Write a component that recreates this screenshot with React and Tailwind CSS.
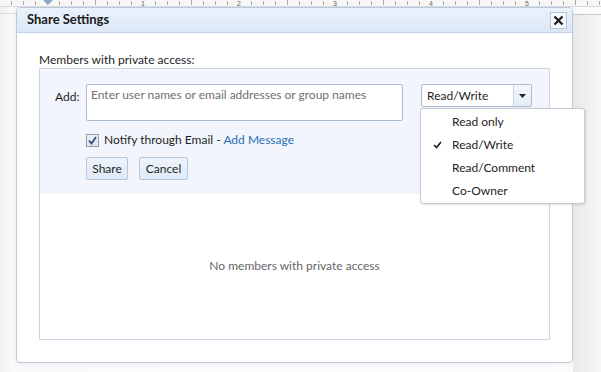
import React from "react";

function Ruler() {
  const ticks = [];
  for (let x = 47 - 36; x < 601; x += 12) {
    const rel = x - 47;
    if (rel % 96 === 0 && rel > 0) continue;
    const tall = rel % 48 === 0;
    ticks.push(
      <line key={x} x1={x + 0.5} x2={x + 0.5} y1={tall ? 0 : 1} y2={5} stroke="#a8a8a8" strokeWidth="1" />
    );
  }
  const nums = [1, 2, 3, 4, 5];
  return (
    <svg width="601" height="7" className="block">
      <rect x="0" y="0" width="601" height="7" fill="#f7f7f7" />
      {ticks}
      {nums.map((n) => (
        <text key={n} x={47 + 96 * n} y="6" fontSize="7" fill="#666" textAnchor="middle" fontFamily="Liberation Sans, sans-serif">
          {n}
        </text>
      ))}
      <path d="M43 0 L53 0 L48 5 Z" fill="#8fa6c4" />
      <line x1="0" x2="601" y1="6.5" y2="6.5" stroke="#d9d9d9" />
    </svg>
  );
}

export default function App() {
  return (
    <div
      className="relative w-[601px] h-[372px] overflow-hidden bg-[linear-gradient(to_right,#f0f0f0,#fafafa_12px,#fbfbfb)] text-[12px] text-[#1e1e1e]"
      style={{ fontFamily: "Lato, 'Noto Sans', sans-serif" }}
    >
      <Ruler />
      <div className="absolute left-0 top-[13px] w-[16px] h-px bg-[#dcdcdc]" />
      <div className="absolute left-[573px] top-[14px] w-[28px] h-px bg-[#c9c9c9]" />
      <div className="absolute left-[573px] top-[15px] w-[28px] h-[357px] bg-[linear-gradient(to_right,#e9e9e9,#f7f7f7)]" />

      <div className="ml-[16px] w-[557px] h-[356px] border border-[#bccadd] rounded-[4px] bg-white overflow-hidden flex flex-col shadow-[0_0_6px_rgba(0,0,0,0.08)]">
        <div className="h-[25px] shrink-0 flex items-center justify-between pl-[10px] pr-[5px] bg-[linear-gradient(to_bottom,#eaf1fb,#dce7f6)] border-b border-[#c4d3e6]">
          <span className="font-bold text-[13px] text-[#1a1a1a]">Share Settings</span>
          <div className="w-[17px] h-[17px] border border-[#b7c6d8] bg-[#f4f7fb] flex items-center justify-center">
            <svg width="11" height="11" viewBox="0 0 11 11">
              <path d="M1.5 1.5 L9.5 9.5 M9.5 1.5 L1.5 9.5" stroke="#1a1a1a" strokeWidth="2.2" />
            </svg>
          </div>
        </div>

        <div className="pl-[22px] pt-[19px]">
          <div className="h-[16px] leading-[16px]">Members with private access:</div>
          <div className="w-[511px] h-[272px] border border-[#c8d6e6] flex flex-col">
            <div className="h-[125px] bg-[#f2f6fc] pt-[15px] flex flex-col">
              <div className="flex items-start">
                <span className="w-[46px] pl-[15px] pt-[5px] leading-[16px]">Add:</span>
                <div className="w-[317px] h-[37px] border border-[#a9bbd1] rounded-[2px] bg-white px-[4px] pt-[2px] leading-[16px] text-[#707070]">
                  Enter user names or email addresses or group names
                </div>
                <div className="ml-[18px] w-[111px] h-[23px] border border-[#a9bbd1] rounded-[2px] bg-white flex">
                  <span className="flex-1 pl-[5px] leading-[22px]">Read/Write</span>
                  <div className="w-[18px] border-l border-[#c4d2e3] bg-[linear-gradient(to_bottom,#f5f8fc,#e3ebf6)] flex items-center justify-center">
                    <svg width="7" height="4" viewBox="0 0 7 4">
                      <path d="M0 0 L7 0 L3.5 4 Z" fill="#222" />
                    </svg>
                  </div>
                </div>
              </div>
              <div className="flex items-center ml-[46px] mt-[11px] h-[16px]">
                <div className="w-[13px] h-[13px] border border-[#8f9db0] bg-[linear-gradient(to_bottom,#eef1f6,#dde3ec)] flex items-center justify-center">
                  <svg width="9" height="9" viewBox="0 0 9 9">
                    <path d="M1 4.5 L3.5 7.5 L8 1" stroke="#3a4a80" strokeWidth="1.8" fill="none" />
                  </svg>
                </div>
                <span className="ml-[5px] leading-[16px]">
                  Notify through Email - <span className="text-[#2a6db5]">Add Message</span>
                </span>
              </div>
              <div className="flex ml-[46px] mt-[9px] gap-[11px]">
                <div className="h-[23px] w-[42px] text-center border border-[#b5c7dd] rounded-[2px] bg-[linear-gradient(to_bottom,#eef4fc,#dfe9f7)] leading-[21px]">Share</div>
                <div className="h-[23px] w-[49px] text-center border border-[#b5c7dd] rounded-[2px] bg-[linear-gradient(to_bottom,#eef4fc,#dfe9f7)] leading-[21px]">Cancel</div>
              </div>
            </div>
            <div className="flex-1 flex items-center justify-center text-[#666] pb-[2px]">
              No members with private access
            </div>
          </div>
        </div>
      </div>

      <div className="absolute left-[420px] top-[108px] w-[165px] h-[96px] bg-white border border-[#c6ccd4] rounded-[3px] shadow-[1px_1px_3px_rgba(0,0,0,0.12)] pt-[1px]">
        {[
          ["Read only", false],
          ["Read/Write", true],
          ["Read/Comment", false],
          ["Co-Owner", false],
        ].map(([label, checked]) => (
          <div key={label} className="h-[23px] flex items-center">
            <span className="w-[31px] flex justify-center pl-[1px]">
              {checked && (
                <svg width="9" height="8" viewBox="0 0 9 8">
                  <path d="M1 4 L3.5 6.5 L8 1" stroke="#222" strokeWidth="1.7" fill="none" />
                </svg>
              )}
            </span>
            <span className="leading-[16px]">{label}</span>
          </div>
        ))}
      </div>
    </div>
  );
}
